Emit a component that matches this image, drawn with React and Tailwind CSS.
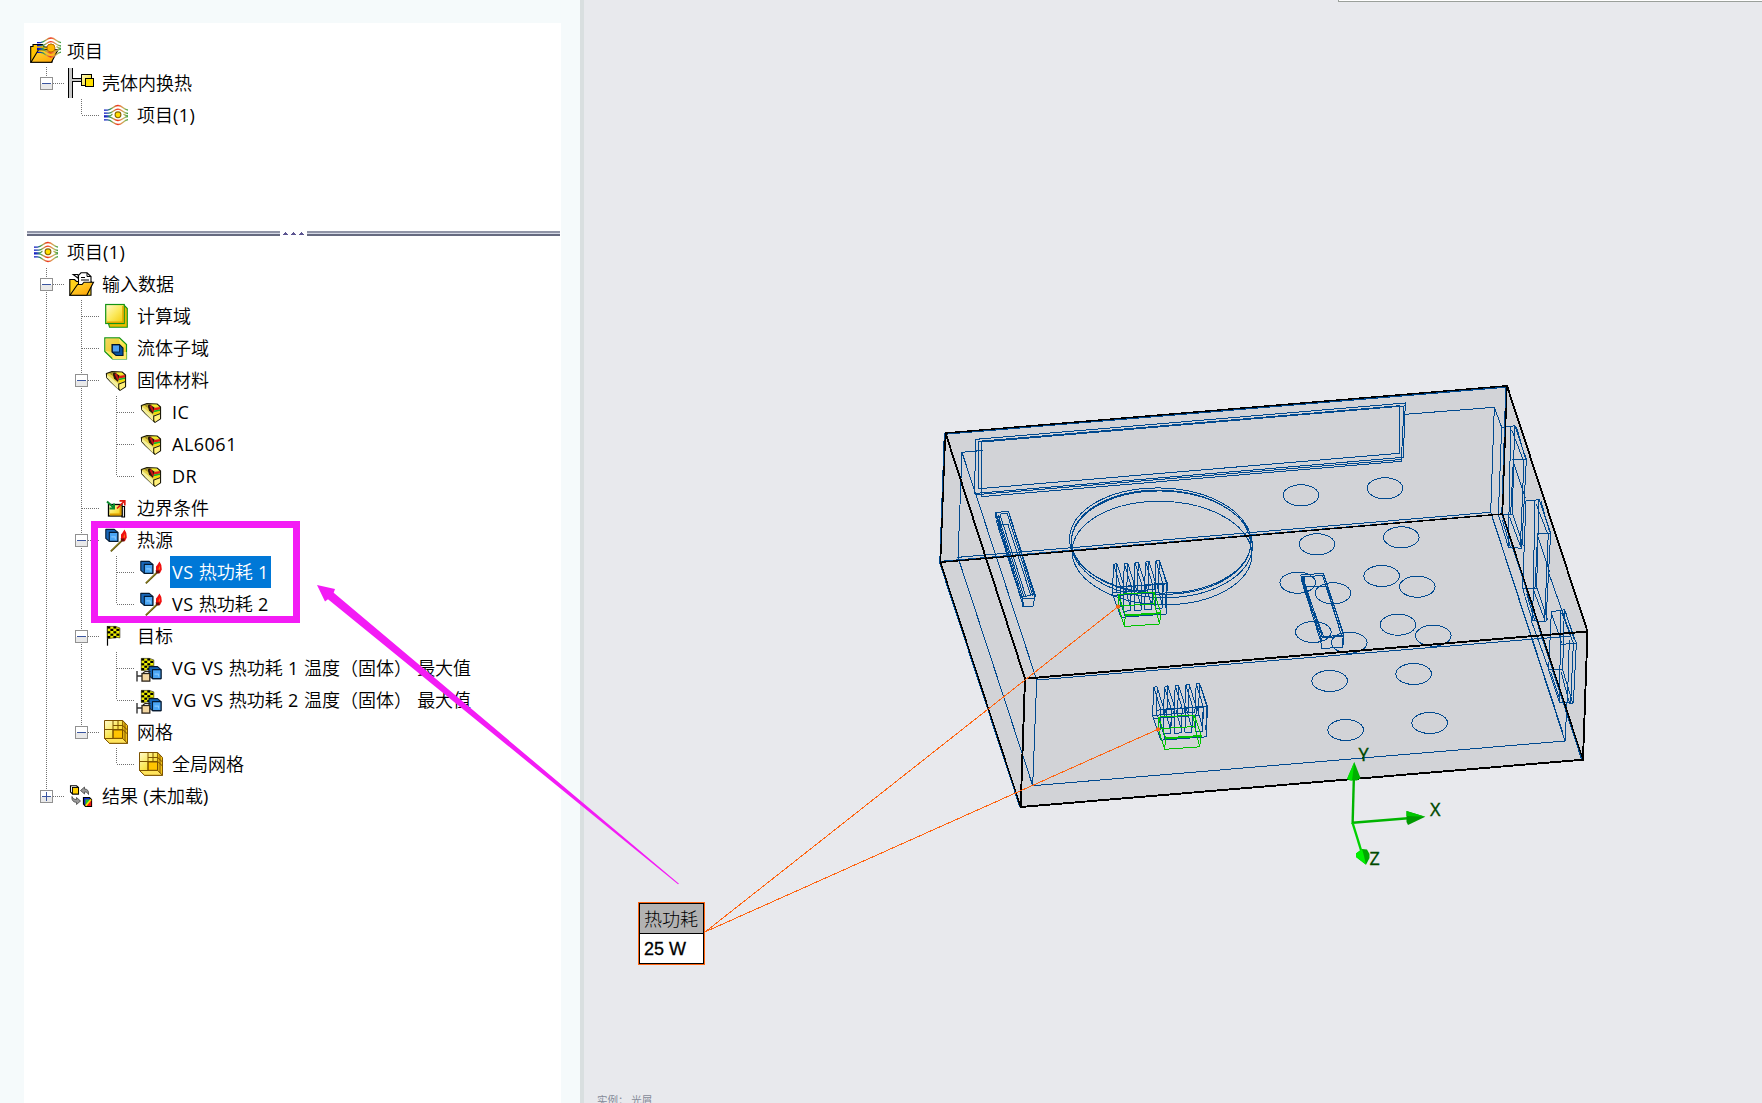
import React from "react";

const OUTLINE = "#1c1a08";

/* ---------- tree icons: each one is drawn in a 32x32 row cell ---------- */

function FlowLines() {
  return (
    <g fill="none" strokeWidth="1.35" stroke="url(#flow)">
      <path d="M0 5.6H3.5C8 5.6 9.5 1 14 1S19.5 5.2 24 5.6" />
      <path d="M0 8.6H5C8.5 8.6 10 4.6 14 4.6S19.5 9 24 9" />
      <path d="M0 11.5H5.5C7 11.5 7 10.5 8.5 9.5" />
      <path d="M19.5 9.5C21 11 22 11.5 24 11.5" />
      <path d="M0 12.4H5C8.5 12.4 10 16 14 16S19.5 12.5 24 12.2" />
      <path d="M0 15.4H3.5C8 15.4 9.5 20 14 20S19.5 15.6 24 15.2" />
      <circle cx="14" cy="10.3" r="2.9" fill="#ffdf00" stroke="#8a6500" strokeWidth="1.1" />
    </g>
  );
}

const FlowIcon = () => (
  <g transform="translate(0 5.5)">
    <FlowLines />
  </g>
);

const ProjectIcon = () => (
  <g>
    <path d="M-3.3 27.2V11.5H-1V9.5H8.5L10.5 12H18V27.2Z" fill="#ffc400" stroke="#000" strokeWidth="1.1" />
    <path d="M-3 27.3L4.5 14.8H24L17.5 27.3Z" fill="url(#gold)" stroke="#000" strokeWidth="1.1" />
    <g transform="translate(3 2)">
      <FlowLines />
      <circle cx="14" cy="11" r="4" fill="#ffb800" stroke="#b87300" strokeWidth="1" />
    </g>
  </g>
);

const AssemblyIcon = () => (
  <g shapeRendering="crispEdges">
    <rect x="-1" y="1" width="5" height="30" fill="#000" />
    <rect x="0" y="1" width="3" height="30" fill="#c8c8c8" />
    <path d="M4 11.5H12M4 14.5H12" stroke="#000" />
    <path d="M3 13H12" stroke="#c8c8c8" strokeWidth="2" />
    <rect x="12.5" y="7.5" width="10" height="11" fill="url(#sheen)" stroke="#000" />
    <rect x="16.5" y="11.5" width="8" height="8" fill="#ffe100" stroke="#000" />
  </g>
);

const FolderIcon = () => (
  <g strokeWidth="1.1" stroke="#000">
    <path d="M.8 27.2V11.5H5.5L7.5 13.5H22V27.2Z" fill="#ffd21a" />
    <path d="M4.2 6.5H9L9.5 10.5Z" fill="#fff" />
    <path d="M9.5 16.5V7.5L12 4.8H18L22 8.5V16.5Z" fill="#fff" />
    <path d="M18 4.8V8.5H22M12 9.5H16M12 12H20" fill="none" strokeWidth="1" />
    <path d="M1 27.3L8.5 16.5H13L15 14.2H24.5L17.8 27.3Z" fill="url(#gold)" />
  </g>
);

const DomainIcon = () => (
  <g>
    <path d="M4.5 23.5L5.5 27.3H23.3V8.5L20 5Z" fill="#e9bd00" stroke="#149414" strokeWidth="1.1" />
    <rect x="1.7" y="4.5" width="18.5" height="19" fill="url(#sheen)" stroke="#149414" strokeWidth="1.2" />
    <path d="M3 22.3H19V6" fill="none" stroke="#dfa800" strokeWidth="1.5" />
  </g>
);

const SubdomainIcon = () => (
  <g>
    <path d="M.8 5.8H15.5L22.5 12.5V27H8.5L.8 19.5Z" fill="url(#sheen)" stroke="#149414" strokeWidth="1.2" />
    <path d="M8.5 27V20H22.5V27Z" fill="#ffe96c" />
    <path d="M1.5 6.5H15L16 13L8 14L8.5 20L1.5 19Z" fill="#e9bc16" opacity=".6" />
    <path d="M8 12.5H15.5L19 16V23.5H12L8 20Z" fill="#07529e" stroke="#02162e" strokeWidth="1.1" />
    <rect x="8.4" y="13" width="7" height="7" fill="#4fa0f2" stroke="#02162e" strokeWidth=".8" />
  </g>
);

const SolidIcon = () => (
  <g strokeLinejoin="round">
    <path d="M2.4 9.5L8 7.6L18 8L21.5 11V22.8L16 26.3L6.5 17.5L2.8 13.5Z" fill="#e8d34a" stroke={OUTLINE} strokeWidth="1.2" />
    <path d="M3 10.5L14.5 20V25.5L6.5 17.5L3 13.5Z" fill="#f4ef9a" />
    <path d="M15 20L21 17.5V22.5L16 26Z" fill="#fff07a" />
    <path d="M8.5 9.5L10.5 8.5L15.5 11.5L14 18L10 14.5Z" fill="#2b1608" />
    <path d="M11.5 9.8L14.2 15.5" stroke="#c41414" strokeWidth="2" />
    <path d="M12 8.4L18 8.8L20 10.6H15Z" fill="#f7f022" />
    <path d="M15 12L21 11V13.4L15 14.4Z" fill="#e11b12" />
    <path d="M15 14.6L21 13.5V15L15 16.2Z" fill="#18b52a" />
    <path d="M15 16.5L21 15.2V17L15 18.8Z" fill="#f2dc00" />
    <path d="M5 9.3L8 9L9 12Z" fill="#9a8d16" />
    <path d="M15 20L21 17.7M14.7 19.5V25.5" stroke={OUTLINE} strokeWidth="1" />
  </g>
);

const BoundaryIcon = () => (
  <g>
    <path d="M18 14.5H20.5V25H18Z" fill="#fff" stroke="#000" strokeWidth="1.2" />
    <rect x="4.5" y="12.5" width="13.5" height="11.5" fill="url(#sheen)" stroke="#000" strokeWidth="1.3" />
    <path d="M6 22.5H16.5V14" stroke="#dc9d00" strokeWidth="1.8" fill="none" />
    <path d="M3 9.5L9.5 15.5M10 11.5V16.5H5.5" stroke="#0b8a2d" strokeWidth="2" fill="none" />
    <path d="M13 16.5L20 9.5M15.5 8.8H20.8V13.5" stroke="#e11b12" strokeWidth="1.7" fill="none" />
  </g>
);

function BlueCube() {
  return (
    <g strokeLinejoin="round" stroke="#041a33" strokeWidth="1.1">
      <path d="M0 0H8.5L12 3V12H3.5L0 9Z" fill="#1766b8" />
      <rect x="3.5" y="3" width="8.5" height="9" fill="#4ba6f5" />
      <path d="M5.5 7.5H9.5V10" stroke="#86c8ff" fill="none" />
    </g>
  );
}

const HeatIcon = () => (
  <g>
    <g transform="translate(1.8 5.4)">
      <BlueCube />
    </g>
    <path d="M6.8 27.3L18 16.5" stroke="#5d540c" strokeWidth="1.8" />
    <path d="M7.2 26.6L17 17.2" stroke="#9b8c1c" strokeWidth=".8" />
    <path d="M20.5 5.5L18.3 9L17 10.5V15.5L19 17H21L22.8 13.5L22.3 9Z" fill="#f01010" />
    <path d="M16.5 14.5H20.5V17.5H17.5Z" fill="#6b0d08" />
    <path d="M20.3 9.5L19.5 13.5H21Z" fill="#ff8a1a" />
  </g>
);

const CHECKS = [
  [0, 0], [6, 0], [3, 2.4], [9, 2.4], [0, 4.8], [6, 4.8], [3, 7.2], [9, 7.2], [0, 9.6], [6, 9.6],
];

function Flag() {
  return (
    <g>
      <path d="M0 0H8L12.5 1.5V11.5L9 11L3 12H0Z" fill="#ecec00" stroke={OUTLINE} strokeWidth=".6" />
      {CHECKS.map(([x, y]) => (
        <rect key={x + "-" + y} x={x} y={y} width="2.9" height="2.2" fill="#000" />
      ))}
    </g>
  );
}

const GoalIcon = () => (
  <g>
    <path d="M3.5 6V25.7" stroke="#000" strokeWidth="1.2" />
    <g transform="translate(3.4 6.4)">
      <Flag />
    </g>
  </g>
);

const GoalItemIcon = () => (
  <g>
    <g transform="translate(2.3 6.4)">
      <Flag />
    </g>
    <g transform="translate(10 14.6)">
      <BlueCube />
    </g>
    <path d="M-2 19V29.5M-2 24H3" stroke="#333" strokeWidth="1.4" fill="none" />
    <rect x="3" y="21.5" width="7.8" height="7.6" fill="#f3d7a1" stroke="#2c241a" strokeWidth="1.3" />
    <path d="M4 21L6 19.5H11.5" stroke="#2c241a" strokeWidth="1.1" fill="none" />
  </g>
);

const MeshIcon = () => (
  <g strokeLinejoin="round" stroke="#7d5300" strokeWidth="1">
    <path d="M.5 22.5L5.5 27.3H23.5V9.5L18.7 4.5Z" fill="#f5c518" />
    <path d="M.5 22.5L5.5 27.3H23.5L18.7 22.5Z" fill="#ffe45c" />
    <rect x=".5" y="4.5" width="18.2" height="18" fill="url(#sheen)" />
    <rect x="9" y="14" width="9.5" height="8.3" fill="#ffc400" />
    <path d="M9 4.5V22.5M.5 13.5H18.7M9 9.5H18.7M14 4.5V13.5M18.7 9.5L23.5 14M18.7 13.5L23.5 18M21 7V25" fill="none" />
  </g>
);

const ResultIcon = () => (
  <g>
    <path d="M1.5 5.8H7.5L9.5 7.5V14H3.5L1.5 12Z" fill="#fff" stroke="#000" strokeWidth="1.1" />
    <rect x="3.5" y="7.5" width="6" height="6.5" fill="#ffcf00" stroke="#000" strokeWidth=".9" />
    <path d="M11.5 10.5L15.5 7V9C18.5 9 20 11 19.5 14.5C18.5 12.3 17.5 12 15.5 12V14Z" fill="#999" stroke="#444" strokeWidth=".8" />
    <path d="M11.5 21L7.5 17.5V19.5C5 19.5 4 18.5 3 16.5C2.5 20.5 4.5 22.3 7.5 22.3V24.5Z" fill="#999" stroke="#444" strokeWidth=".8" />
    <path d="M14.5 17.5H20.5L22.5 19.5V26.3H16.5L14.5 24Z" fill="#0a2bd8" stroke="#000" strokeWidth="1.2" />
    <rect x="16.5" y="19.5" width="5.7" height="6.5" fill="#f01818" />
    <path d="M16.5 26V19.5H21.5Z" fill="#14c43c" />
    <path d="M16.8 25.8L22 19.6" stroke="#ffe500" strokeWidth="1.6" />
  </g>
);

/* ---------- tree ---------- */

/* Guide cell kinds: b blank, v line, t tee, l elbow, m minus box on a line, e minus box at the end, p plus box at the end */
function Guide({ kind }) {
  const box = kind === "m" || kind === "e" || kind === "p";
  const full = kind === "v" || kind === "t" || kind === "m";
  return (
    <svg className="h-8 w-[35px] shrink-0" viewBox="0 0 35 32" shapeRendering="crispEdges">
      <g stroke="#707070" strokeDasharray="1 1" fill="none">
        {kind !== "b" && <path d={full ? "M12.5 0V32" : "M12.5 0V16"} />}
        {kind !== "b" && kind !== "v" && <path d="M13 16.5H31" />}
      </g>
      {box && (
        <g>
          <rect x="6" y="10" width="13" height="13" rx="1" fill="#919191" />
          <rect x="7" y="11" width="11" height="11" fill="#fff" />
          <rect x="7" y="17" width="11" height="5" fill="#e9e9e9" />
          <path d={kind === "p" ? "M8 16.5H17M12.5 12V21" : "M8 16.5H17"} stroke="#3a55a0" />
        </g>
      )}
    </svg>
  );
}

/* Latin runs are set slightly wider than the Chinese text around them */
function Label({ text }) {
  return text.split(/([\x20-\x7e]+)/).map((run, i) =>
    i % 2 ? (
      <span key={i} className="font-normal tracking-[0.5px]">
        {run}
      </span>
    ) : (
      run
    )
  );
}

function Row({ guides = "", icon: Icon, label, selected }) {
  return (
    <div className="flex h-8 items-center">
      {guides.split("").map((kind, i) => (
        <Guide key={i} kind={kind} />
      ))}
      <svg className="mr-px size-8 shrink-0 overflow-visible" viewBox="0 0 32 32">
        <Icon />
      </svg>
      <span
        className={
          "-ml-0.5 h-8 px-0.5 text-[18px] leading-8 font-[350] whitespace-pre " +
          (selected ? "bg-[#0078d7] text-white" : "text-black")
        }
      >
        <Label text={label} />
      </span>
    </div>
  );
}

const PROJECT_ROWS = [
  { icon: ProjectIcon, label: "项目" },
  { guides: "e", icon: AssemblyIcon, label: "壳体内换热" },
  { guides: "bl", icon: FlowIcon, label: "项目(1)" },
];

const STUDY_ROWS = [
  { icon: FlowIcon, label: "项目(1)" },
  { guides: "m", icon: FolderIcon, label: "输入数据" },
  { guides: "vt", icon: DomainIcon, label: "计算域" },
  { guides: "vt", icon: SubdomainIcon, label: "流体子域" },
  { guides: "vm", icon: SolidIcon, label: "固体材料" },
  { guides: "vvt", icon: SolidIcon, label: "IC" },
  { guides: "vvt", icon: SolidIcon, label: "AL6061" },
  { guides: "vvl", icon: SolidIcon, label: "DR" },
  { guides: "vt", icon: BoundaryIcon, label: "边界条件" },
  { guides: "vm", icon: HeatIcon, label: "热源" },
  { guides: "vvt", icon: HeatIcon, label: "VS 热功耗 1", selected: true },
  { guides: "vvl", icon: HeatIcon, label: "VS 热功耗 2" },
  { guides: "vm", icon: GoalIcon, label: "目标" },
  { guides: "vvt", icon: GoalItemIcon, label: "VG VS 热功耗 1 温度（固体） 最大值" },
  { guides: "vvl", icon: GoalItemIcon, label: "VG VS 热功耗 2 温度（固体） 最大值" },
  { guides: "ve", icon: MeshIcon, label: "网格" },
  { guides: "vbl", icon: MeshIcon, label: "全局网格" },
  { guides: "p", icon: ResultIcon, label: "结果 (未加载)" },
];

function SplitterBar() {
  return (
    <div className="flex h-[5px] flex-1 flex-col">
      <div className="h-0.5 bg-[#9094a6]" />
      <div className="h-px bg-[#d5d9e6]" />
      <div className="h-0.5 bg-[#666a80]" />
    </div>
  );
}

function Splitter() {
  return (
    <div className="ml-[3px] flex h-[5px] w-[533px]">
      <SplitterBar />
      <svg className="h-[5px] w-[27px]" viewBox="0 0 27 5" shapeRendering="crispEdges">
        <path d="M3 4H8L5.5 1ZM11 4H16L13.5 1ZM19 4H24L21.5 1Z" fill="#5b5490" />
      </svg>
      <SplitterBar />
    </div>
  );
}

/* ---------- wireframe model ---------- */

const HOLES = [
  [1301, 495.3], [1385, 488.3], [1317, 544.3], [1401.3, 537.3], [1297.7, 582.7], [1333, 593.3],
  [1381.7, 576], [1417.3, 586.7], [1313.3, 632], [1349.3, 642.7], [1398, 624.7], [1433.3, 635.7],
  [1329.7, 681], [1413.7, 674], [1345.7, 730], [1429.7, 723],
];

const FINS = [[0, 0], [32, -2], [64, -4.5], [96, -7], [127, -10]];

function HeatSink() {
  return (
    <g>
      <g transform="translate(1115 563.7) scale(.33333)" stroke="#00498f" strokeWidth="3">
        {FINS.map(([x, y]) => (
          <path
            key={x}
            transform={`translate(${x} ${y})`}
            d="M-4 2L6 0L3 85M-4 2L-8 86M-4 2L17 70L15 132M6 0L27 68L25 142M17 70L27 68"
          />
        ))}
        {FINS.slice(0, 4).map(([x, y]) => (
          <path key={x} transform={`translate(${x} ${y})`} d="M25 143L46 141L49 66L27 68M30 72L46 130" />
        ))}
        <path d="M-8 87L17 161L153 151L157 59L133 -10M-8 87L120 77M5 71L150 61M8 90L30 158M-3 96L135 86" />
      </g>
      <path
        stroke="#00c400"
        strokeWidth="1"
        d="M1118.5 594.3L1153 592.3M1118.5 594.3L1118 606L1154.5 603.7L1153 592.3M1154 592.3L1161 613L1159.5 624L1124.5 626.5L1118 606M1118.5 594.3L1125.3 615L1160.7 612.7M1125 616L1160.5 613.6M1125.3 615L1124.5 626.5M1154.5 603.7L1159.5 624"
      />
    </g>
  );
}

function Vent({ x = 0, y = 0 }) {
  return (
    <path
      transform={`translate(${1260 + x} ${370 + y}) scale(.33333)`}
      strokeWidth="3"
      d="M752 170L764 166L799 268L785 535L745 531ZM764 166L757 430L790 528M755 180L789 268M770 172L796 266M757 268H799M792 268L781 532M760 272L752 433M760 276L796 385M715 433H757M725 172L752 170M725 172L715 433L745 531M727 450L751 530M748 440L780 525"
    />
  );
}

function Model() {
  return (
    <g shapeRendering="crispEdges" fill="none">
      <path d="M945.5 433L1507 386L1587.5 631.5L1583 760L1020.7 807L940.5 562Z" fill="#d2d3d7" />
      <g stroke="#00498f">
        {/* inner shell */}
        <path d="M983 450.5L962 452.3L958 557.3L1490.7 512.3L1494.3 407.3L1405.3 414.3M1494.3 407.3L1501.7 427.3M1548 571L1571 636M962 452.3L1036.7 680L1032.7 785.7L958 557.3M1036.7 680L1571 636M1032.7 785.7L1565 741L1490.7 512.3M1565 741L1567 703" />
        <path d="M1531 620L1549 670M1492 516L1563 733" />
        {/* rear opening */}
        <path d="M976 439.3L1405.3 403L1403.3 457.3L974.3 493.5ZM979 441.3L1400 405.7L1399.3 453.3L978.7 488.7ZM982 442L1404 406L1401.3 461.3L981.3 496.7ZM976 494.7L1401 459.5M976 450H982" />
        {/* round boss */}
        <ellipse cx="1160.3" cy="540.5" rx="90.8" ry="52.5" transform="rotate(1.5 1160.3 540.5)" />
        <ellipse cx="1161" cy="542.2" rx="89.5" ry="52" transform="rotate(1.5 1161 542.2)" />
        <ellipse cx="1161.8" cy="544.3" rx="90.7" ry="53.3" transform="rotate(1.5 1161.8 544.3)" />
        <ellipse cx="1162" cy="553" rx="90" ry="51.7" transform="rotate(1.5 1162 553)" />
        {/* left slot */}
        <path d="M996 512.5L1008.5 511.3L1035.3 595.5L1033 606L1023.5 606.5L1022.5 598ZM995.5 514L1021 597.5L1035 594M998 515L1024 597M1000 514.5L1026 597M1001 513.5L1007 513L1033 596M997 524.5H1008L1031 596M1022 598.3H1034M1022.5 599L1023 606.5M996 512L995.5 518M996 520L1022 602M1009 514L1035 598M999 516V524" />
        {/* centre slot */}
        <path d="M1300.7 575L1323.3 573.3L1344 636.7L1342.7 647L1321.3 648.7L1320.7 637ZM1302.7 576.5L1322.5 637.5L1344 636.5M1302 578L1324 638M1306 590L1322 641M1301 577L1322.5 575.5L1342 637M1304.3 577V586.5H1326.7L1340 630M1321 637L1344 635M1342.7 638V647M1301 579L1321 642M1324 575L1343.5 634" />
        {HOLES.map(([cx, cy]) => (
          <ellipse key={cx + "-" + cy} cx={cx} cy={cy} rx="17.8" ry="10.5" />
        ))}
        <Vent />
        <Vent x={24.3} y={73.7} />
        <path
          transform="translate(1240 560) scale(.33333)"
          strokeWidth="3"
          d="M934 154L963 152L973 148L1009 250L1000 430L958 427L926 330ZM963 150L958 427M973 148L968 330L998 428M965 158L1000 250L992 430M988 240L982 430M962 253L1009 250M926 330L968 328M932 336L960 420M963 335L988 428M934 160L966 250M978 160L1003 240"
        />
      </g>
      <HeatSink />
      <g transform="translate(40.2 122.8)">
        <HeatSink />
      </g>
      {/* outer shell */}
      <g stroke="#00498f" strokeWidth="1.4">
        <path d="M945.5 434L1507 387M944.5 433L940 562M939.5 562L1020 807M1506 386L1502 514L1582 760M941 561.5L1502 514" />
      </g>
      <g stroke="#000">
        <path strokeWidth="1.4" d="M945.5 433L1507 385.8L1502.5 514L940.5 562.3L1020.7 807M945.5 433L940.5 562.3M1502.5 514L1583 759.7" />
        <path strokeWidth="1.9" d="M945.5 433L1025 678.6L1587.5 631.5L1507 385.8M1025 678.6L1020.7 807L1583 759.7L1587.5 631.5" />
      </g>
    </g>
  );
}

function AxisTriad() {
  return (
    <g>
      <g stroke="#00b400" strokeWidth="2.4" fill="none">
        <path d="M1352.6 824L1353.8 780" />
        <path d="M1352.6 822.7L1408 818.3" />
        <path d="M1352.6 823L1361 850" stroke="#00d200" />
      </g>
      <path d="M1354.3 762L1347 779L1350 780.6H1357L1360.5 778Z" fill="#00b000" />
      <path d="M1354.3 762L1347 779L1352 780.6Z" fill="#00e400" />
      <path d="M1425.3 816.7L1406.5 811V822L1408 825Z" fill="#009a00" />
      <path d="M1425.3 816.7L1406.5 811V816Z" fill="#00c800" />
      <path d="M1366 864.7L1356 857V853.5L1362 849L1367 849.5L1369.5 854V858Z" fill="#00a800" />
      <path d="M1366 864.7L1356 857V853.5L1362 849L1364 856Z" fill="#00f000" />
      <g fill="#004a00" stroke="#004a00" strokeWidth=".3" fontSize="18" fontFamily="'Noto Sans', 'Open Sans', sans-serif">
        <text x="1358.4" y="760.5">Y</text>
        <text x="1430" y="816">X</text>
        <text x="1369.5" y="865">Z</text>
      </g>
    </g>
  );
}

export default function App() {
  return (
    <div className="relative flex h-[1103px] w-[1762px] overflow-hidden bg-[#e8e9ed] font-['Open_Sans','Noto_Sans_CJK_SC',sans-serif]">
      <svg className="absolute size-0">
        <defs>
          <linearGradient id="flow" gradientUnits="userSpaceOnUse" x1="0" x2="24" y1="0" y2="0">
            <stop offset="0" stopColor="#0000c8" />
            <stop offset=".14" stopColor="#1c3fb0" />
            <stop offset=".26" stopColor="#2f9a4c" />
            <stop offset=".4" stopColor="#c9a04e" />
            <stop offset=".56" stopColor="#f0301c" />
            <stop offset=".7" stopColor="#e8894a" />
            <stop offset=".85" stopColor="#b9b860" />
            <stop offset="1" stopColor="#2f9a3c" />
          </linearGradient>
          <linearGradient id="gold" x1="0" x2="1" y1="0" y2="1">
            <stop offset="0" stopColor="#ffe23a" />
            <stop offset="1" stopColor="#ff9d00" />
          </linearGradient>
          <linearGradient id="sheen" x1="0" x2="1" y1="0" y2="1">
            <stop offset="0" stopColor="#fffbd0" />
            <stop offset=".5" stopColor="#fbe95c" />
            <stop offset="1" stopColor="#f2c600" />
          </linearGradient>
        </defs>
      </svg>

      <aside className="flex w-[584px] shrink-0 border-r-4 border-[#d9dfe0] bg-[#f5fafb] pt-[23px] pl-6">
        <div className="flex w-[537px] flex-col bg-white">
          <div className="h-[208px] pt-3 pl-2.5">
            {PROJECT_ROWS.map((row, i) => (
              <Row key={i} {...row} />
            ))}
          </div>
          <Splitter />
          <div className="pl-2.5">
            {STUDY_ROWS.map((row, i) => (
              <Row key={i} {...row} />
            ))}
          </div>
        </div>
      </aside>

      <main className="flex flex-1 flex-col justify-between overflow-hidden">
        <div className="ml-[754px] h-0.5 border-b border-l border-[#9ba09b] bg-white" />
        <div className="ml-[13px] h-[9px] text-[10.5px] leading-[13px] whitespace-pre text-[#858a98]">实例： 光屑</div>
      </main>

      {/* model canvas with leader lines and annotation marks */}
      <svg className="pointer-events-none absolute inset-0" width="1762" height="1103" viewBox="0 0 1762 1103">
        <Model />
        <AxisTriad />
        <g stroke="#ff6410" shapeRendering="crispEdges">
          <path d="M705.5 931.7L1118 606.7" />
          <path d="M705.5 931.7L1158 729.3" />
        </g>
        <g fill="#ff6410">
          <circle cx="1118" cy="606.7" r="2.1" />
          <circle cx="1158" cy="729.3" r="2.1" />
        </g>
        <path d="M317 585L335 589L333.7 592.7L679 883.8L678 884.3L328 599.3L325 601.5Z" fill="#f31cf5" />
      </svg>

      <div className="absolute top-[521px] left-[91px] h-[102px] w-[209px] border-[7px] border-[#f31cf5]" />

      <div className="absolute top-[902px] left-[638px] h-[63px] w-[67px] border border-[#ff6410] bg-black p-px">
        <div className="h-[29px] bg-[#b2b2b2] pl-[4px] text-[18px] leading-[30px] font-light">热功耗</div>
        <div className="mt-px h-[29px] bg-white pl-[4px] font-['Liberation_Sans',sans-serif] text-[18px] leading-[30px] [-webkit-text-stroke:0.3px_black]">
          25 W
        </div>
      </div>
    </div>
  );
}
